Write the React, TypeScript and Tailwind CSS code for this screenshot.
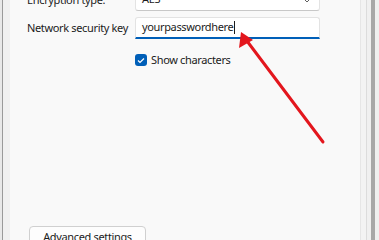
export default function App() {
  const font = { fontFamily: '"Noto Sans", "Open Sans", sans-serif' }
  return (
    <div className="relative w-[379px] h-[240px] overflow-hidden bg-[#f0f0f0] flex text-[11px] tracking-[-0.35px] text-[#1b1b1b] whitespace-nowrap" style={font}>
      {/* left window edge */}
      <div className="w-[10px] h-full flex">
        <div className="w-[2px] bg-[#e8e8e8]" />
        <div className="w-[1px] bg-[#9a9a9a]" />
        <div className="flex-1 bg-[#f0f0f0]" />
      </div>

      {/* dialog panel */}
      <div className="w-[351px] h-full bg-[#f9f9f9] border-r border-[#e6e6e6] flex flex-col pl-[17px]">
        <div className="flex items-center -mt-[12px] h-[23px]">
          <span className="w-[108px] pt-[1px]">Encryption type:</span>
          <div className="w-[185px] h-[23px] bg-white border border-[#e3e3e3] border-b-[#c8c8c8] rounded-[3px] flex items-center justify-between px-[6px]">
            <span>AES</span>
            <svg width="10" height="6" viewBox="0 0 10 6" className="mr-[1px]">
              <path d="M1 1 L5 5 L9 1" fill="none" stroke="#606060" strokeWidth="1" />
            </svg>
          </div>
        </div>

        <div className="flex items-center mt-[6px] h-[22px]">
          <span className="w-[108px]">Network security key</span>
          <div className="w-[185px] h-[22px] bg-white border border-[#e3e3e3] border-b-2 border-b-[#005fb8] rounded-t-[3px] flex items-center px-[6px]">
            <span>yourpasswordhere</span>
            <span className="w-[1px] h-[13px] bg-[#1b1b1b] ml-[1px]" />
          </div>
        </div>

        <div className="flex items-center mt-[13px] ml-[108px] gap-[4px]">
          <div className="w-[12px] h-[12px] rounded-[3px] bg-[#005fb8] flex items-center justify-center">
            <svg width="8" height="7" viewBox="0 0 8 7">
              <path d="M1 3.5 L3 5.5 L7 1.5" fill="none" stroke="white" strokeWidth="1.2" />
            </svg>
          </div>
          <span>Show characters</span>
        </div>

        <div className="mt-auto -mb-[10px] ml-[2px]">
          <button className="w-[117px] h-[24px] bg-[#fdfdfd] border border-[#d0d0d0] rounded-[4px] text-[11px] pb-[2px]">
            Advanced settings
          </button>
        </div>
      </div>

      {/* right window edge */}
      <div className="flex-1 h-full flex">
        <div className="w-[6px] bg-[#f3f3f3] border-r border-[#dcdcdc]" />
        <div className="w-[4px] bg-[#f0f0f0]" />
        <div className="w-[4px] bg-[#a8a8a8]" />
        <div className="flex-1 bg-[#f0f0f0]" />
      </div>

      {/* red annotation arrow */}
      <svg className="absolute left-0 top-0 pointer-events-none" width="379" height="240">
        <line x1="323" y1="142" x2="247" y2="41" stroke="#e3161d" strokeWidth="3" strokeLinecap="round" />
        <polygon points="241,32 239,48 253,40" fill="#e3161d" />
      </svg>
    </div>
  )
}
